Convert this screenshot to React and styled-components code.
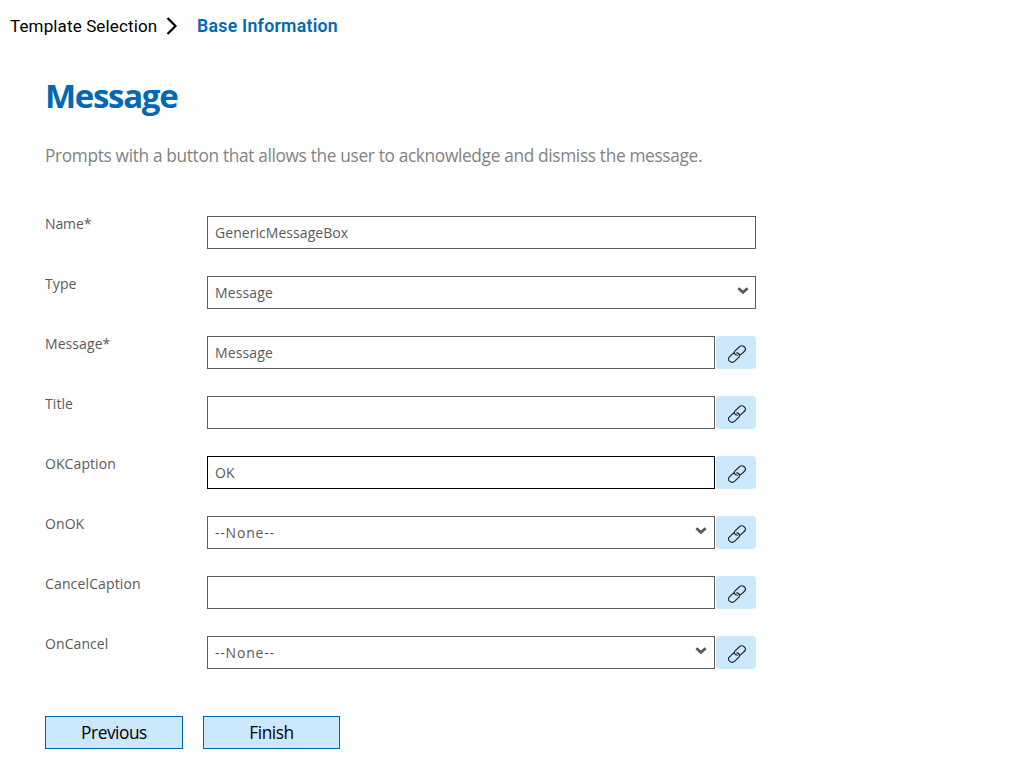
import React from "react";
import styled, { createGlobalStyle } from "styled-components";

const GlobalStyle = createGlobalStyle`
  *, *::before, *::after { box-sizing: border-box; }
  body { margin: 0; background: #fff; }
  input, select, button { margin: 0; font: inherit; border-radius: 0; outline: none; }
`;

const Page = styled.main`
  height: 773px;
  overflow: hidden;
  background: #fff;
  font-family: "Open Sans", "Noto Sans", sans-serif;
  color: #5a5a5a;
`;

const Breadcrumb = styled.nav`
  display: flex;
  align-items: center;
  height: 52px;
  padding-left: 10px;
  font-family: Roboto, "Liberation Sans", sans-serif;
  font-size: 17px;
  line-height: 20px;
  white-space: nowrap;
`;

const Crumb = styled.span`
  width: ${(p) => (p.$current ? "auto" : "156px")};
  color: ${(p) => (p.$current ? "#0068b4" : "#000")};
  font-size: ${(p) => (p.$current ? "17.7px" : "17px")};
  font-weight: ${(p) => (p.$current ? 600 : 400)};
  letter-spacing: ${(p) => p.$spacing || "0"};
`;

const Separator = styled.svg`
  display: block;
  width: 12px;
  height: 20px;
  margin-right: 19px;
`;

const Content = styled.section`
  padding-left: 45px;
`;

const Heading = styled.h1`
  margin: 0;
  padding-top: 22px;
  height: 88px;
  color: #0068b4;
  font-size: 33px;
  line-height: 44px;
  font-weight: 700;
  letter-spacing: -1.3px;
`;

const Description = styled.p`
  margin: 0;
  height: 76px;
  padding-top: 3px;
  color: #828282;
  font-size: 17.3px;
  line-height: 26px;
  letter-spacing: -0.34px;
  white-space: nowrap;
`;

const Form = styled.form`
  display: grid;
  row-gap: 27px;
`;

const Row = styled.div`
  display: grid;
  grid-template-columns: 162px 549px;
  height: 33px;
`;

const Label = styled.label`
  font-size: 14px;
  line-height: 16px;
  letter-spacing: ${(p) => p.$spacing || "0.08px"};
`;

const Controls = styled.div`
  display: flex;
  gap: 1px;
`;

const Field = styled.div`
  position: relative;
  flex: 1;
  height: 33px;
`;

const TextInput = styled.input`
  display: block;
  width: 100%;
  height: 33px;
  padding: 0 7px;
  border: 1px solid ${(p) => (p.$active ? "#000" : "#5e5e5e")};
  background: #fff;
  color: #5a5a5a;
  font-size: 14px;
  letter-spacing: ${(p) => p.$spacing || "0.05px"};
`;

const Select = styled(TextInput).attrs({ as: "select" })`
  appearance: none;
`;

const Chevron = styled.svg`
  position: absolute;
  top: 11px;
  right: ${(p) => (p.$wide ? "7px" : "8px")};
  width: 12px;
  height: 9px;
  pointer-events: none;
`;

const LinkButton = styled.button`
  display: grid;
  place-items: center;
  width: 40px;
  height: 33px;
  padding: 2px 0 0 1px;
  border: 0;
  border-radius: 4px;
  background: #cbe8fc;
  color: #222;
`;

const Actions = styled.div`
  display: flex;
  gap: 20px;
  margin-top: 47px;
`;

const ActionButton = styled.button`
  width: ${(p) => p.$width};
  height: 33px;
  padding: 0;
  border: 1px solid #0064a8;
  background: #cbe8fc;
  color: #000;
  font-size: 17.3px;
  line-height: 31px;
  letter-spacing: -0.45px;
`;

const LinkIcon = () => (
  <svg width="20" height="18" viewBox="0 0 20 18" fill="none" stroke="currentColor" strokeWidth="1.15" strokeLinecap="round" strokeLinejoin="round">
    <path d="M10.3 10.2C7.9 9.9 6.7 8 7.8 6.2L12.2 2C13.5.7 15.6.5 17.2 1.7C18.8 2.9 18.9 4.8 17.7 6L14.4 9.2C13.8 9.8 13 10.1 12.2 10.1" />
    <path d="M9.8 7.9C12.2 8.2 13.3 10.2 12.2 11.9L7.8 16.1C6.5 17.4 4.4 17.6 2.8 16.4C1.2 15.2 1.1 13.3 2.3 12.1L5.6 8.9C6.2 8.3 6.8 8 7.6 7.9" />
  </svg>
);

const fields = [
  { label: "Name*", value: "GenericMessageBox", wide: true, labelSpacing: "-0.1px" },
  { label: "Type", value: "Message", wide: true, select: true, spacing: "0.12px" },
  { label: "Message*", value: "Message", spacing: "0.12px" },
  { label: "Title", value: "" },
  { label: "OKCaption", value: "OK", active: true },
  { label: "OnOK", value: "--None--", select: true, spacing: "0.8px" },
  { label: "CancelCaption", value: "", labelSpacing: "0.14px" },
  { label: "OnCancel", value: "--None--", select: true, spacing: "0.8px" },
];

export default function App() {
  return (
    <Page>
      <GlobalStyle />
      <Breadcrumb>
        <Crumb $spacing="0.13px">Template Selection</Crumb>
        <Separator viewBox="0 0 12 20" fill="none" stroke="#000" strokeWidth="2.2">
          <path d="M1.5 2L9.5 10L1.5 18" />
        </Separator>
        <Crumb $current $spacing="0.27px">Base Information</Crumb>
      </Breadcrumb>
      <Content>
        <Heading>Message</Heading>
        <Description>Prompts with a button that allows the user to acknowledge and dismiss the message.</Description>
        <Form>
          {fields.map((f) => (
            <Row key={f.label}>
              <Label htmlFor={f.label} $spacing={f.labelSpacing}>{f.label}</Label>
              <Controls>
                <Field>
                  {f.select ? (
                    <>
                      <Select id={f.label} $spacing={f.spacing}><option>{f.value}</option></Select>
                      <Chevron $wide={f.wide} viewBox="0 0 12 9" fill="none" stroke="#5a5a5a" strokeWidth="2.8">
                        <path d="M1.3 1.2L6 5.3L10.7 1.2" />
                      </Chevron>
                    </>
                  ) : (
                    <TextInput id={f.label} defaultValue={f.value} $active={f.active} $spacing={f.spacing} />
                  )}
                </Field>
                {!f.wide && <LinkButton type="button" aria-label={`Bind ${f.label}`}><LinkIcon /></LinkButton>}
              </Controls>
            </Row>
          ))}
        </Form>
        <Actions>
          <ActionButton $width="138px">Previous</ActionButton>
          <ActionButton $width="137px">Finish</ActionButton>
        </Actions>
      </Content>
    </Page>
  );
}
